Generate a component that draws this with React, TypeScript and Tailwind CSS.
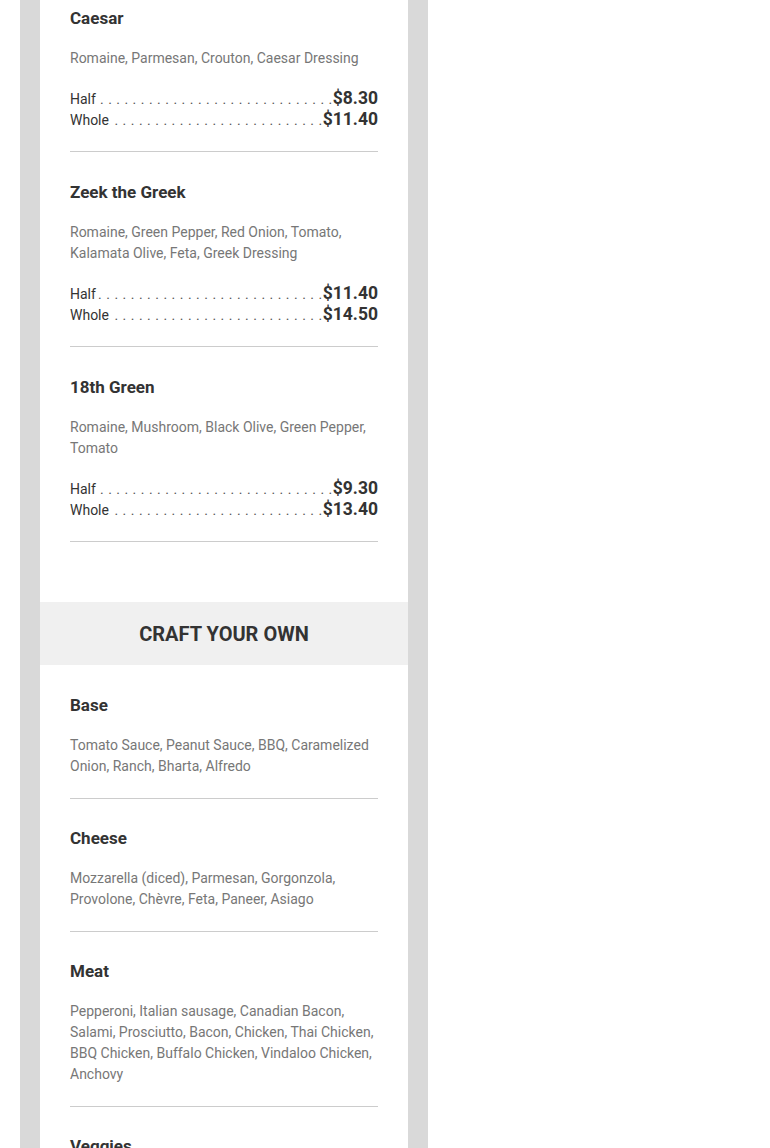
const salads = [
  {
    name: 'Caesar',
    desc: 'Romaine, Parmesan, Crouton, Caesar Dressing',
    prices: [
      { label: 'Half', price: '$8.30' },
      { label: 'Whole', price: '$11.40' },
    ],
  },
  {
    name: 'Zeek the Greek',
    desc: 'Romaine, Green Pepper, Red Onion, Tomato, Kalamata Olive, Feta, Greek Dressing',
    prices: [
      { label: 'Half', price: '$11.40' },
      { label: 'Whole', price: '$14.50' },
    ],
  },
  {
    name: '18th Green',
    desc: 'Romaine, Mushroom, Black Olive, Green Pepper, Tomato',
    prices: [
      { label: 'Half', price: '$9.30' },
      { label: 'Whole', price: '$13.40' },
    ],
  },
];

const craft = [
  { name: 'Base', desc: 'Tomato Sauce, Peanut Sauce, BBQ, Caramelized Onion, Ranch, Bharta, Alfredo' },
  { name: 'Cheese', desc: 'Mozzarella (diced), Parmesan, Gorgonzola, Provolone, Chèvre, Feta, Paneer, Asiago' },
  {
    name: 'Meat',
    desc: 'Pepperoni, Italian sausage, Canadian Bacon, Salami, Prosciutto, Bacon, Chicken, Thai Chicken, BBQ Chicken, Buffalo Chicken, Vindaloo Chicken, Anchovy',
  },
  {
    name: 'Veggies',
    desc: 'Mushroom, Black Olive, Green Pepper, Red Onion, Tomato, Spinach, Jalapeño, Pineapple, Artichoke, Roasted Garlic',
  },
];

// leader ends on a dot right against the price
const dots = ' .'.repeat(60);

function PriceRow({ label, price }: { label: string; price: string }) {
  return (
    <div className="flex items-baseline h-[21px]">
      <span className="text-[14px] text-[#333] shrink-0">{label}</span>
      <span className="flex-1 min-w-0 overflow-hidden flex justify-end">
        <span className="shrink-0 whitespace-pre text-[14px] leading-[21px] text-[#555] tracking-[0.5px]">{dots}</span>
      </span>
      <span className="shrink-0 text-[17.5px] font-bold text-[#333]">{price}</span>
    </div>
  );
}

function Item({ name, desc, prices }: { name: string; desc: string; prices?: { label: string; price: string }[] }) {
  return (
    <div className={prices ? 'pt-[28px] pb-[24px] border-b border-[#cccccc]' : 'pt-[27px] pb-[21px] border-b border-[#cccccc]'}>
      <h3 className="text-[17px] font-bold text-[#333] leading-[24px]">{name}</h3>
      <p className="mt-[18px] text-[14px] leading-[21px] text-[#777]">{desc}</p>
      {prices && (
        <div className="mt-[16px]">
          {prices.map((p) => (
            <PriceRow key={p.label} label={p.label} price={p.price} />
          ))}
        </div>
      )}
    </div>
  );
}

export default function App() {
  return (
    <div className="min-h-screen bg-white px-5" style={{ fontFamily: 'Roboto, "Liberation Sans", sans-serif' }}>
      <div className="w-[408px] bg-[#d9d9d9] px-5 -mt-[22px]">
        <div className="bg-white">
          {/* Salads */}
          <div className="px-[30px] pb-[60px]">
            {salads.map((s) => (
              <Item key={s.name} name={s.name} desc={s.desc} prices={s.prices} />
            ))}
          </div>

          {/* Craft your own */}
          <div className="h-[63px] bg-[#f0f0f0] flex items-center justify-center">
            <h2 className="text-[20px] font-bold text-[#333] uppercase">Craft Your Own</h2>
          </div>
          <div className="px-[30px] pt-px pb-[60px]">
            {craft.map((c) => (
              <Item key={c.name} name={c.name} desc={c.desc} />
            ))}
          </div>
        </div>
      </div>
    </div>
  );
}
